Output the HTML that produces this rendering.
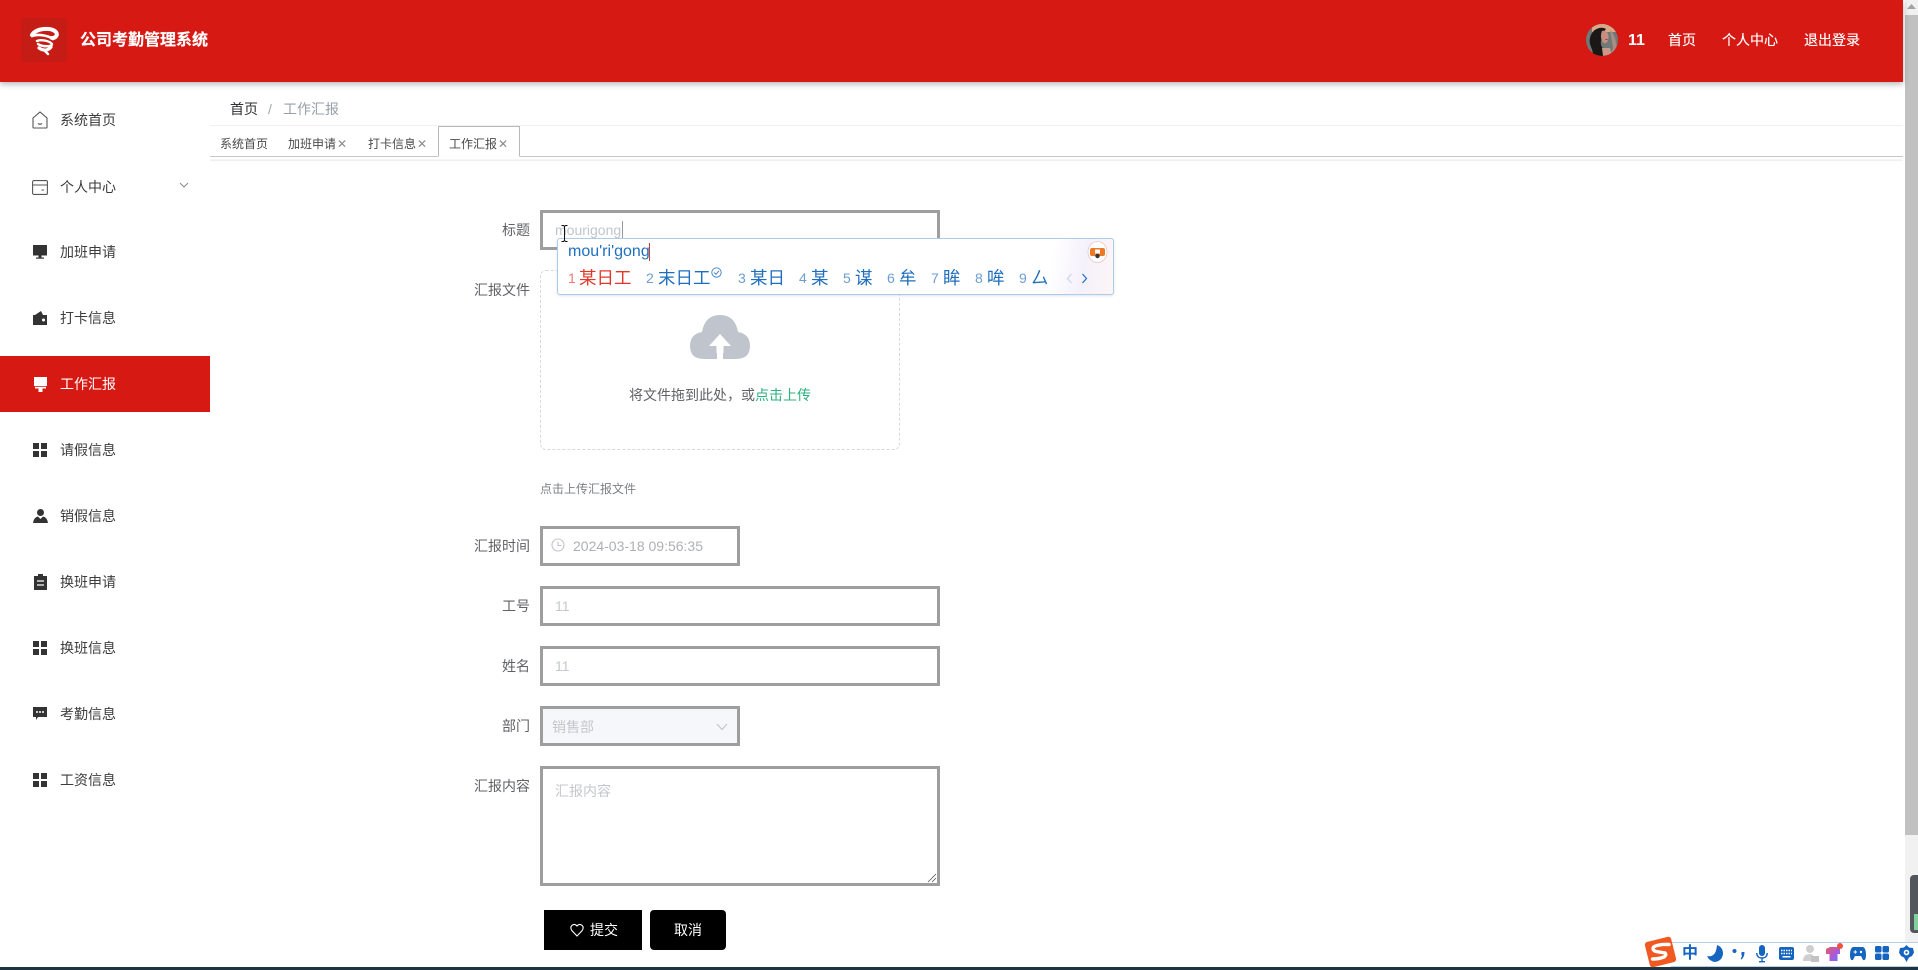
<!DOCTYPE html>
<html lang="zh">
<head>
<meta charset="utf-8">
<title>公司考勤管理系统</title>
<style>
*{box-sizing:border-box}
html,body{margin:0;padding:0;width:1918px;height:970px;overflow:hidden;background:#fff;font-family:"Liberation Sans","Noto Sans CJK SC",sans-serif}
.a{position:absolute}
.t{position:absolute;white-space:nowrap;line-height:20px;height:20px;font-size:14px}
.nav{color:#3c3c3c;left:60px}
.lab{color:#606266;right:1388px;text-align:right}
.box{position:absolute;border:3px solid #9e9e9e;background:#fff}
.ph{color:#c4c7cc}
.tab{color:#4a4a4a;font-size:12px}
.x{color:#8a8a8a;font-size:12px}
.cn{color:#1f6fbe;font-size:17.5px;top:268px;letter-spacing:0}
.d{color:#6d9dcf;font-size:14px;top:268px}
.ic{position:absolute}
</style>
</head>
<body>

<!-- header -->
<div class="a" style="left:0;top:0;width:1903px;height:82px;background:#d71914;box-shadow:0 2px 6px rgba(0,0,0,.3);z-index:3">
  <div class="a" style="left:21px;top:18px;width:46px;height:44px;background:#c51d15"></div>
  <svg class="a" style="left:29px;top:26px" width="30" height="30" viewBox="0 0 30 30" fill="none" stroke="#fff" stroke-linecap="round">
    <path d="M3 9C7 2 22 1 27 6C29 9 27 12 23 12" stroke-width="4"/>
    <path d="M3 10C9 8 18 9 24 13" stroke-width="2.600"/>
    <path d="M8 15C12 13 21 15 23 18C23 21 13 21 9 18" stroke-width="2.400"/>
    <path d="M10 22C14 25 19 25 22 21" stroke-width="3.200"/>
    <path d="M16 25L19 28" stroke-width="2.400"/>
  </svg>
  <div class="t" style="left:80px;top:31px;font-size:16px;font-weight:bold;color:#fff;text-shadow:0 0 .5px #fff">公司考勤管理系统</div>
  <svg class="a" style="left:1586px;top:24px" width="32" height="32" viewBox="0 0 32 32">
    <defs><clipPath id="av"><circle cx="16" cy="16" r="16"/></clipPath></defs>
    <g clip-path="url(#av)">
      <rect width="32" height="32" fill="#6f7a78"/>
      <rect x="6" y="0" width="26" height="8" fill="#d9a98a"/>
      <path d="M24 6C29 10 31 20 32 32H24L27 24Z" fill="#a88d84"/>
      <path d="M4 14C6 4 16 2 20 5C17 8 17 12 15 17C14 22 17 25 21 28L20 32H6C9 26 2 22 4 14Z" fill="#1b1717"/>
      <path d="M16 7C20 6 23 9 22.500 14C22 18 20 20 18 19C15 17 14 12 16 7Z" fill="#c58f80"/>
      <path d="M16 24L24 24L26 32H17Z" fill="#c99a8a"/>
      <path d="M19.500 15.500L21.500 15.500" stroke="#b03030" stroke-width="1"/>
    </g>
  </svg>
  <div class="t" style="left:1628px;top:31px;font-size:16px;font-weight:bold;color:#fff">11</div>
  <div class="t" style="left:1668px;top:30px;color:#fff;text-shadow:0 0 .4px #fff">首页</div>
  <div class="t" style="left:1722px;top:30px;color:#fff;text-shadow:0 0 .4px #fff">个人中心</div>
  <div class="t" style="left:1804px;top:30px;color:#fff;text-shadow:0 0 .4px #fff">退出登录</div>
</div>

<!-- scrollbar -->
<div class="a" style="left:1905px;top:0;width:13px;height:942px;background:#f1f1f1"></div>
<div class="a" style="left:1905px;top:15px;width:13px;height:820px;background:#c1c1c1"></div>
<svg class="a" style="left:1905px;top:3px" width="13" height="8"><path d="M6.500 1L11 6H2Z" fill="#a3a3a3"/></svg>
<div class="a" style="left:1910px;top:875px;width:8px;height:58px;background:#53565c;border-radius:4px 0 0 4px"></div>
<div class="a" style="left:1914px;top:914px;width:4px;height:16px;background:#7fd09c"></div>

<!-- sidebar -->
<div class="a" style="left:0;top:356px;width:210px;height:56px;background:#d71914"></div>

<svg class="ic" style="left:32px;top:111px" width="16" height="18" viewBox="0 0 16 18" fill="none" stroke="#555" stroke-width="1.100">
  <path d="M1 7L8 1L15 7V16.200Q15 17 14 17H2Q1 17 1 16.200Z"/><path d="M6 12.500Q8 14 10 12.500"/>
</svg>
<div class="t nav" style="top:110px">系统首页</div>

<svg class="ic" style="left:32px;top:180px" width="16" height="15" viewBox="0 0 16 15" fill="none" stroke="#555" stroke-width="1.100">
  <rect x=".6" y=".6" width="14.800" height="13.800" rx="1.200"/><path d="M1 5H15M9.500 10H12"/>
</svg>
<div class="t nav" style="top:177px">个人中心</div>
<svg class="ic" style="left:179px;top:182px" width="10" height="7" viewBox="0 0 10 7" fill="none" stroke="#8a8a8a"><path d="M1 1L5 5L9 1"/></svg>

<svg class="ic" style="left:33px;top:245px" width="14" height="15" viewBox="0 0 14 15" fill="#333"><rect width="14" height="10.500"/><rect x="5.500" y="10.500" width="3" height="2"/><rect x="3" y="12.500" width="8" height="1.200"/></svg>
<div class="t nav" style="top:242px">加班申请</div>

<svg class="ic" style="left:33px;top:311px" width="14" height="14" viewBox="0 0 14 14" fill="#333"><path d="M0 4H14V14H0Z"/><path d="M2 4L8 0L10 4Z"/><circle cx="10.500" cy="9" r="1.500" fill="#fff"/></svg>
<div class="t nav" style="top:308px">打卡信息</div>

<svg class="ic" style="left:34px;top:377px" width="13" height="15" viewBox="0 0 13 15" fill="#fff"><rect width="13" height="9"/><path d="M1 9.800H12V11.500H8.500V15H4.500V11.500H1Z"/></svg>
<div class="t" style="left:60px;top:374px;color:#fff">工作汇报</div>

<svg class="ic" style="left:33px;top:443px" width="14" height="14" viewBox="0 0 14 14" fill="#333"><rect width="6" height="6"/><rect x="8" width="6" height="6"/><rect y="8" width="6" height="6"/><rect x="8" y="8" width="6" height="6"/></svg>
<div class="t nav" style="top:440px">请假信息</div>

<svg class="ic" style="left:33px;top:509px" width="15" height="14" viewBox="0 0 15 14" fill="#333"><circle cx="7.500" cy="3.500" r="3.500"/><path d="M0 14Q1 8 5 7.500L7.500 10L10 7.500Q14 8 15 14Z"/></svg>
<div class="t nav" style="top:506px">销假信息</div>

<svg class="ic" style="left:34px;top:574px" width="13" height="16" viewBox="0 0 13 16"><path d="M0 2H4V0H9V2H13V16H0Z" fill="#333"/><path d="M3 7H10M3 11H10" stroke="#fff" stroke-width="1.300"/></svg>
<div class="t nav" style="top:572px">换班申请</div>

<svg class="ic" style="left:33px;top:641px" width="14" height="14" viewBox="0 0 14 14" fill="#333"><rect width="6" height="6"/><rect x="8" width="6" height="6"/><rect y="8" width="6" height="6"/><rect x="8" y="8" width="6" height="6"/></svg>
<div class="t nav" style="top:638px">换班信息</div>

<svg class="ic" style="left:33px;top:707px" width="14" height="14" viewBox="0 0 14 14"><path d="M0 0H14V10H5L3 13V10H0Z" fill="#333"/><circle cx="4" cy="5" r="1" fill="#fff"/><circle cx="7" cy="5" r="1" fill="#fff"/><circle cx="10" cy="5" r="1" fill="#fff"/></svg>
<div class="t nav" style="top:704px">考勤信息</div>

<svg class="ic" style="left:33px;top:773px" width="14" height="14" viewBox="0 0 14 14" fill="#333"><rect width="6" height="6"/><rect x="8" width="6" height="6"/><rect y="8" width="6" height="6"/><rect x="8" y="8" width="6" height="6"/></svg>
<div class="t nav" style="top:770px">工资信息</div>

<!-- breadcrumb -->
<div class="t" style="left:230px;top:99px;color:#303133">首页</div>
<div class="t" style="left:268px;top:99px;color:#a0a7b2">/</div>
<div class="t" style="left:283px;top:99px;color:#97a0aa">工作汇报</div>

<!-- tabs -->
<div class="a" style="left:210px;top:125px;width:1693px;height:1px;background:#f0f0f0"></div>
<div class="a" style="left:210px;top:156px;width:1693px;height:1px;background:#c8c8c8"></div>
<div class="a" style="left:210px;top:157px;width:1693px;height:4px;background:linear-gradient(#fff,#fff 2px,#ececec 3px,#f4f4f4)"></div>
<div class="t tab" style="left:220px;top:134px">系统首页</div>
<div class="t tab" style="left:288px;top:134px">加班申请</div>
<div class="t x" style="left:337px;top:134px">✕</div>
<div class="t tab" style="left:368px;top:134px">打卡信息</div>
<div class="t x" style="left:417px;top:134px">✕</div>
<div class="a" style="left:438px;top:126px;width:82px;height:31px;border:1px solid #b8b8b8;border-bottom:1px solid #fff;background:#fff"></div>
<div class="t tab" style="left:449px;top:134px">工作汇报</div>
<div class="t x" style="left:498px;top:134px">✕</div>

<!-- form -->
<div class="t lab" style="top:220px">标题</div>
<div class="box" style="left:540px;top:210px;width:400px;height:40px"></div>
<div class="t ph" style="left:555px;top:220px;color:#c0c4cc">mourigong</div>
<div class="a" style="left:622px;top:221px;width:1px;height:18px;background:#9a9a9a"></div>

<div class="t lab" style="top:280px">汇报文件</div>
<div class="a" style="left:540px;top:270px;width:360px;height:180px;border:1px dashed #d9d9d9;border-radius:6px"></div>
<svg class="a" style="left:690px;top:315px" width="60" height="45" viewBox="0 0 60 45">
  <path d="M14 44Q0 44 0 31Q0 19 12 17Q15 0 30 0Q45 0 48 17Q60 19 60 31Q60 44 46 44Z" fill="#c0c4cc"/>
  <path d="M30 26L41 38H33.500V45H26.500V38H19Z" fill="#fff" transform="translate(0 -7)"/>
  <rect x="27" y="36" width="6" height="9" fill="#fff"/>
</svg>
<div class="t" style="left:629px;top:385px;color:#606266">将文件拖到此处，或<span style="color:#2bb07f">点击上传</span></div>
<div class="t" style="left:540px;top:479px;font-size:12px;color:#7d8086">点击上传汇报文件</div>

<div class="t lab" style="top:536px">汇报时间</div>
<div class="box" style="left:540px;top:526px;width:200px;height:40px"></div>
<svg class="a" style="left:551px;top:538px" width="14" height="14" viewBox="0 0 14 14" fill="none" stroke="#c0c4cc" stroke-width="1.100"><circle cx="7" cy="7" r="6"/><path d="M7 3.500V7.500H10.500"/></svg>
<div class="t" style="left:573px;top:536px;color:#aeb0b4">2024-03-18 09:56:35</div>

<div class="t lab" style="top:596px">工号</div>
<div class="box" style="left:540px;top:586px;width:400px;height:40px"></div>
<div class="t ph" style="left:555px;top:596px">11</div>

<div class="t lab" style="top:656px">姓名</div>
<div class="box" style="left:540px;top:646px;width:400px;height:40px"></div>
<div class="t ph" style="left:555px;top:656px">11</div>

<div class="t lab" style="top:716px">部门</div>
<div class="box" style="left:540px;top:706px;width:200px;height:40px;background:#f5f7fa"></div>
<div class="t ph" style="left:552px;top:717px">销售部</div>
<svg class="a" style="left:716px;top:723px" width="12" height="8" viewBox="0 0 12 8" fill="none" stroke="#c0c4cc" stroke-width="1.100"><path d="M1 1L6 6.500L11 1"/></svg>

<div class="t lab" style="top:776px">汇报内容</div>
<div class="box" style="left:540px;top:766px;width:400px;height:120px"></div>
<div class="t ph" style="left:555px;top:781px">汇报内容</div>
<svg class="a" style="left:927px;top:873px" width="10" height="10" viewBox="0 0 10 10" stroke="#555" fill="none" stroke-width=".8"><path d="M1 9L9 1M5 9L9 5"/></svg>

<div class="a" style="left:544px;top:910px;width:98px;height:40px;background:#000"></div>
<svg class="a" style="left:570px;top:923px" width="14" height="14" viewBox="0 0 14 14" fill="none" stroke="#fff" stroke-width="1.100"><path d="M7 13L1.800 7.500Q-.2 4.500 2 2.300Q4.800 .2 7 3Q9.200 .2 12 2.300Q14.200 4.500 12.200 7.500Z"/></svg>
<div class="t" style="left:590px;top:920px;color:#fff">提交</div>
<div class="a" style="left:650px;top:910px;width:76px;height:40px;background:#000;border-radius:4px"></div>
<div class="t" style="left:674px;top:920px;color:#fff">取消</div>

<!-- IME popup -->
<div class="a" style="left:557px;top:238px;width:557px;height:57px;background:linear-gradient(100deg,#fff 0,#fff 88%,#f4f1fb 94%,#fdf6f6 100%);border:1px solid #aecbe8;border-radius:3px;box-shadow:0 1px 2px rgba(120,150,190,.25)"></div>
<div class="t" style="left:568px;top:242px;font-size:16px;color:#1f6fbe">mou'ri'gong</div>
<div class="a" style="left:649px;top:243px;width:1px;height:18px;background:#d0392b"></div>
<svg class="a" style="left:1087px;top:241px" width="21" height="22" viewBox="0 0 21 22">
  <ellipse cx="10.500" cy="11" rx="9.500" ry="10.500" fill="#fff" stroke="#ecc6c0" stroke-width=".8"/>
  <rect x="3" y="7" width="15" height="8" rx="2" fill="#ea7a28"/>
  <rect x="8" y="8.500" width="5" height="4" fill="#fff"/>
  <circle cx="10.500" cy="15" r="2.200" fill="#333"/>
</svg>
<div class="t d" style="left:568px;color:#ee7a70">1</div>
<div class="t cn" style="left:579px;color:#e0392b">某日工</div>
<div class="t d" style="left:646px">2</div>
<div class="t cn" style="left:658px">末日工</div>
<svg class="a" style="left:711px;top:267px" width="11" height="11" viewBox="0 0 11 11" fill="none" stroke="#3a7fc6" stroke-width=".9"><circle cx="5.500" cy="5.500" r="4.700"/><path d="M3.200 5.500L5 7.300L8 3.800"/></svg>
<div class="t d" style="left:738px">3</div>
<div class="t cn" style="left:750px">某日</div>
<div class="t d" style="left:799px">4</div>
<div class="t cn" style="left:811px">某</div>
<div class="t d" style="left:843px">5</div>
<div class="t cn" style="left:855px">谋</div>
<div class="t d" style="left:887px">6</div>
<div class="t cn" style="left:899px">牟</div>
<div class="t d" style="left:931px">7</div>
<div class="t cn" style="left:943px">眸</div>
<div class="t d" style="left:975px">8</div>
<div class="t cn" style="left:987px">哞</div>
<div class="t d" style="left:1019px">9</div>
<div class="t cn" style="left:1031px">厶</div>
<svg class="a" style="left:1066px;top:273px" width="7" height="11" viewBox="0 0 7 11" fill="none" stroke="#c5d6ea" stroke-width="1.200"><path d="M5.500 1L1.500 5.500L5.500 10"/></svg>
<svg class="a" style="left:1081px;top:273px" width="7" height="11" viewBox="0 0 7 11" fill="none" stroke="#1f6fbe" stroke-width="1.200"><path d="M1.500 1L5.500 5.500L1.500 10"/></svg>

<!-- I-beam cursor -->
<svg class="a" style="left:560px;top:225px" width="9" height="17" viewBox="0 0 9 17" fill="none" stroke="#111"><path d="M1.500 .5H3.500L4.500 1.500L5.500 .5H7.500M4.500 1.500V15.500M1.500 16.500H3.500L4.500 15.500L5.500 16.500H7.500"/></svg>

<!-- bottom taskbar strip -->
<div class="a" style="left:0;top:967px;width:1918px;height:3px;background:#1f3340"></div>

<!-- Sogou toolbar -->
<div class="a" style="left:1671px;top:942px;width:247px;height:25px;background:#fff;border-top:1px solid #b6cfe6;border-bottom:1px solid #b6cfe6"></div>
<svg class="a" style="left:1644px;top:936px" width="34" height="32" viewBox="0 0 34 32">
  <rect x="3" y="3" width="27" height="26" rx="3" fill="#f05a22" transform="rotate(-14 16.500 16)"/>
  <path d="M25 8.500Q14 8 9.500 11Q8 14 12 15.500L21 17Q23 19 20 21Q15 23 8.500 23" fill="none" stroke="#fff" stroke-width="3.400" stroke-linecap="round"/>
</svg>
<div class="t" style="left:1682px;top:944px;font-size:16px;font-weight:bold;color:#1565c0">中</div>
<svg class="ic" style="left:1707px;top:945px" width="16" height="17" viewBox="0 0 16 17"><path d="M10 0Q16 2 16 9Q15 16 8 17Q2 16 0 11Q9 13 10 0Z" fill="#1565c0"/></svg>
<svg class="ic" style="left:1732px;top:948px" width="13" height="12" viewBox="0 0 13 12" fill="#1565c0"><circle cx="2.500" cy="3" r="2"/><path d="M9.500 4H12.500Q12.500 9 9.500 11.500L8.500 11Q10 9 10 7.500H9.500Z"/></svg>
<svg class="ic" style="left:1756px;top:945px" width="12" height="18" viewBox="0 0 12 18" fill="#1565c0"><rect x="3" y="0" width="6" height="11" rx="3"/><path d="M.7 8Q1 13 6 13Q11 13 11.300 8" fill="none" stroke="#1565c0" stroke-width="1.400"/><rect x="5.300" y="13" width="1.400" height="3"/><rect x="3" y="16" width="6" height="1.400"/></svg>
<svg class="ic" style="left:1779px;top:947px" width="15" height="13" viewBox="0 0 15 13"><rect width="15" height="13" rx="2" fill="#1565c0"/><path d="M2 3.500H13M2 6.500H13" stroke="#fff" stroke-width="1.400" stroke-dasharray="1.500 1"/><rect x="3.500" y="9" width="8" height="1.500" fill="#fff"/></svg>
<svg class="ic" style="left:1803px;top:945px" width="16" height="17" viewBox="0 0 16 17" fill="#cfcfcf"><circle cx="7" cy="4" r="4"/><path d="M0 16Q0 9 7 9Q9 9 10 10V16Z"/><rect x="8" y="11" width="8" height="6" fill="#c2c2c2"/></svg>
<svg class="ic" style="left:1826px;top:943px" width="17" height="18" viewBox="0 0 17 18"><defs><linearGradient id="sh" x1="0" y1="0" x2="1" y2="1"><stop offset="0" stop-color="#ea5a5a"/><stop offset=".6" stop-color="#a85ae0"/><stop offset="1" stop-color="#5a7af0"/></linearGradient></defs><path d="M0 6L4 4H11L14 6V11H11.500V18H3.500V11H0Z" fill="url(#sh)"/><circle cx="14" cy="3" r="3" fill="#f4503c"/></svg>
<svg class="ic" style="left:1850px;top:947px" width="16" height="14" viewBox="0 0 16 14"><path d="M3 0H13Q16 1 16 8Q16 14 13 13L11 9H5L3 13Q0 14 0 8Q0 1 3 0Z" fill="#1565c0"/><path d="M3.500 5H7M5.250 3.300V6.700" stroke="#fff" stroke-width="1"/><circle cx="11" cy="5" r="1.200" fill="#fff"/></svg>
<svg class="ic" style="left:1875px;top:946px" width="14" height="14" viewBox="0 0 14 14" fill="#1565c0"><rect width="6.500" height="6.500" rx="1.500"/><rect x="7.500" width="6.500" height="6.500" rx="1.500"/><rect y="7.500" width="6.500" height="6.500" rx="1.500"/><rect x="7.500" y="7.500" width="6.500" height="6.500" rx="1.500"/></svg>
<svg class="ic" style="left:1899px;top:945px" width="15" height="17" viewBox="0 0 15 17"><path d="M7.500 0L10 2.500L14 3L15 7.500L13 11L10 12.500L7.500 17L5 12.500L2 11L0 7.500L1 3L5 2.500Z" fill="#1565c0"/><circle cx="7.500" cy="7.500" r="2.800" fill="#fff"/><circle cx="7.500" cy="7.500" r="1.200" fill="#1565c0"/></svg>

</body>
</html>
